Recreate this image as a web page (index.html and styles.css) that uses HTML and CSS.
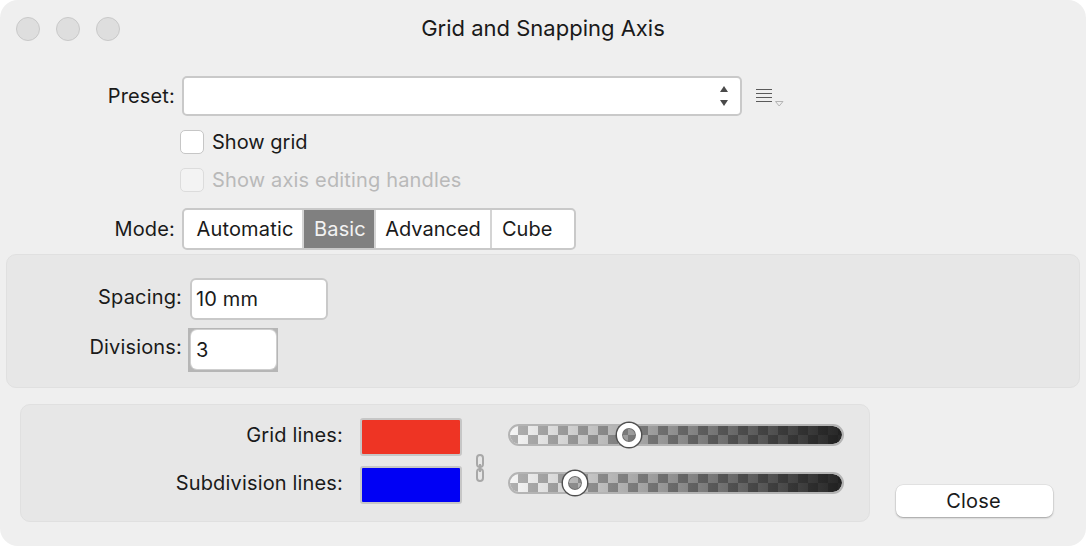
FILE: index.html
```html
<!DOCTYPE html>
<html lang="en">
<head>
<meta charset="utf-8">
<title>Grid and Snapping Axis</title>
<link rel="stylesheet" href="styles.css">
</head>
<body>
<div class="window">
  <header class="titlebar">
    <div class="lights"><span class="light"></span><span class="light"></span><span class="light"></span></div>
    <h1 class="title">Grid and Snapping Axis</h1>
  </header>

  <div class="row preset-row">
    <label class="label">Preset:</label>
    <div class="select">
      <svg class="stepper" width="10" height="22" viewBox="0 0 10 22"><path d="M5 1 9 7H1Z" fill="#4a4a4a"/><path d="M1 15H9L5 21Z" fill="#4a4a4a"/></svg>
    </div>
    <svg class="menu-icon" width="28" height="20" viewBox="0 0 28 20"><path d="M0 1.5H16M0 5.5H16M0 9.5H16M0 13.5H16" stroke="#5a5a5a" stroke-width="1" fill="none"/><path d="M19.5 13.5H27L23.2 18Z" stroke="#b4b4b4" stroke-width="1" fill="none"/></svg>
  </div>

  <div class="row check-row first-check">
    <span class="checkbox"></span><span class="tight">Show grid</span>
  </div>
  <div class="row check-row disabled">
    <span class="checkbox"></span><span>Show axis editing handles</span>
  </div>

  <div class="row mode-row">
    <label class="label">Mode:</label>
    <div class="segments">
      <span class="seg seg-auto">Automatic</span>
      <span class="seg seg-basic active">Basic</span>
      <span class="seg seg-adv">Advanced</span>
      <span class="seg seg-cube">Cube</span>
    </div>
  </div>

  <section class="panel">
    <div class="panel-row">
      <label class="panel-label">Spacing:</label>
      <div class="field spacing">10 mm</div>
    </div>
    <div class="panel-row divisions-row">
      <label class="panel-label">Divisions:</label>
      <div class="focus-ring"><div class="field divisions">3</div></div>
    </div>
  </section>

  <div class="bottom">
    <section class="colors">
      <label class="color-label">Grid lines:</label>
      <div class="swatch red"></div>
      <svg class="chain" width="10" height="28" viewBox="0 0 10 28"><rect x="2" y="1" width="6" height="12" rx="3" fill="none" stroke="#a8a8a8" stroke-width="2"/><rect x="2" y="15" width="6" height="12" rx="3" fill="none" stroke="#a8a8a8" stroke-width="2"/><path d="M5 10V18" stroke="#a8a8a8" stroke-width="2"/></svg>
      <div class="slider"><span class="thumb thumb-grid"></span></div>
      <label class="color-label">Subdivision lines:</label>
      <div class="swatch blue"></div>
      <div class="slider"><span class="thumb thumb-sub"></span></div>
    </section>
    <button class="close">Close</button>
  </div>
</div>
</body>
</html>
```

FILE: styles.css
```css
* { box-sizing: border-box; }
html, body { margin: 0; padding: 0; background: #fff; }
body { width: 1086px; height: 546px; overflow: hidden; font-family: Inter, "Liberation Sans", sans-serif; font-size: 20px; letter-spacing: .16px; color: #1a1a1a; }
.window { width: 1086px; height: 546px; background: #efefef; border-radius: 18px; display: flex; flex-direction: column; }
.titlebar { height: 57px; flex: none; display: grid; grid-template-columns: 1fr auto 1fr; align-items: center; padding-left: 16px; }
.lights { display: flex; gap: 16px; }
.light { width: 24px; height: 24px; border-radius: 50%; background: #dedede; border: 1px solid #c9c9c9; }
.title { grid-column: 2; margin: 0 0 2px; font-size: 22px; font-weight: 400; letter-spacing: 0; color: #1a1a1a; transform: translateX(-8px); }
.row { display: flex; align-items: center; flex: none; }
.label { width: 175px; text-align: right; flex: none; }
.preset-row { margin-top: 19px; height: 40px; }
.select { margin-left: 7px; width: 560px; height: 40px; background: #fff; border: 2px solid #c9c9c9; border-radius: 5px; display: flex; align-items: center; justify-content: flex-end; padding-right: 11px; }
.stepper { display: block; }
.menu-icon { margin-left: 14px; margin-top: 3px; }
.check-row { height: 24px; padding-left: 180px; gap: 8px; }
.tight { letter-spacing: 0; }
.first-check { margin-top: 14px; }
.disabled { margin-top: 14px; color: #b9b9b9; }
.checkbox { width: 24px; height: 24px; background: #fff; border: 1px solid #c6c6c6; border-radius: 5px; }
.disabled .checkbox { background: #f3f3f3; border-color: #dcdcdc; }
.mode-row { margin-top: 16px; height: 42px; }
.segments { margin-left: 7px; width: 394px; height: 42px; display: flex; background: #fff; border: 2px solid #c9c9c9; border-radius: 5px; overflow: hidden; }
.seg { display: flex; align-items: center; justify-content: center; height: 100%; flex: none; border-right: 2px solid #d4d4d4; }
.seg-auto { width: 120px; padding-left: 4px; }
.seg-basic { width: 72px; padding-left: 2px; }
.seg-adv { width: 116px; letter-spacing: 0; }
.seg-cube { flex: 1; border-right: 0; justify-content: flex-start; padding-left: 10px; letter-spacing: 0; }
.seg.active { background: #808080; color: #f2f2f2; border-right-color: #d4d4d4; }
.panel { margin: 4px 6px 0; height: 134px; flex: none; background: #e7e7e7; border: 1px solid #e0e0e0; border-radius: 10px; padding-top: 23px; }
.panel-row { display: flex; align-items: center; }
.panel-label { width: 175px; text-align: right; flex: none; margin-bottom: 4px; }
.field { background: #fff; border: 2px solid #c9c9c9; border-radius: 6px; padding-left: 4px; display: flex; align-items: center; }
.spacing { margin-left: 8px; width: 138px; height: 42px; }
.divisions-row { margin-top: 8px; }
.divisions-row .panel-label { margin-bottom: 6px; }
.focus-ring { margin-left: 6px; width: 90px; height: 44px; background: #b6b6b6; padding: 2px 2px 3px 3px; }
.divisions { width: 85px; height: 39px; border: 0; border-radius: 6px; padding-left: 5px; box-shadow: 0 0 0 1px #cfcfcf; }
.bottom { margin-top: 16px; padding-left: 20px; display: flex; align-items: flex-end; }
.colors { width: 850px; height: 118px; background: #e7e7e7; border: 1px solid #e0e0e0; border-radius: 10px; padding: 13px 0 0 0; display: grid; grid-template-columns: 322px 119px 46px 336px; grid-template-rows: 38px 38px; row-gap: 10px; align-items: center; }
.color-label { text-align: right; margin-bottom: 4px; }
.swatch { margin-left: 17px; width: 102px; height: 38px; border: 2px solid #c6c6c6; border-radius: 3px; justify-self: start; }
.red { background: #ee3424; }
.blue { background: #0000f5; }
.chain { grid-column: 3; grid-row: 1 / span 2; justify-self: center; margin-left: -10px; margin-top: 14px; }
.slider { position: relative; grid-column: 4; width: 336px; height: 22px; margin-bottom: 4px; border-radius: 11px; border: 2px solid #b4b4b4; background-color: #fff;
  background-image: linear-gradient(to right, rgba(30,30,30,0) 0%, rgba(20,20,20,.92) 100%), conic-gradient(#b0b0b0 25%, #f6f6f6 0 50%, #b0b0b0 0 75%, #f6f6f6 0);
  background-size: 100% 100%, 20px 20px; background-position: 0 0, -2px -1px; background-clip: padding-box; }
.thumb { position: absolute; top: -3px; width: 24px; height: 24px; margin-left: -12px; border-radius: 50%; border: 5px solid #fff; box-shadow: 0 0 0 1.5px #505050, inset 0 0 0 1px #6f6f6f; background: rgba(110,110,110,.25); }
.thumb-grid { left: 35.7%; }
.thumb-sub { left: 19.7%; }
.close { margin-left: 26px; margin-bottom: 5px; width: 157px; height: 32px; background: #fff; border: 0; border-radius: 7px; box-shadow: 0 1px 2px rgba(0,0,0,.3), 0 0 0 .5px rgba(0,0,0,.08); font: inherit; letter-spacing: .16px; color: #1a1a1a; padding: 0 2px 0 0; }
```
